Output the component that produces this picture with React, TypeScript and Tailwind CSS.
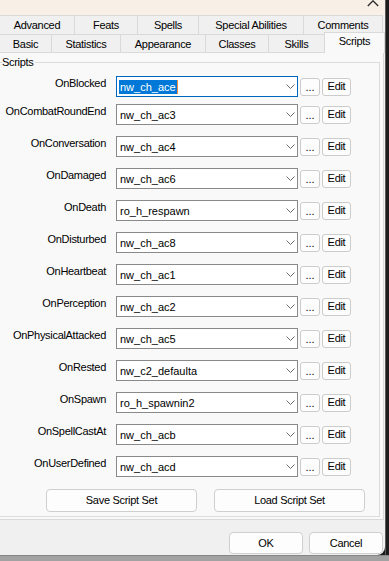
const scripts: [string, string][] = [
  ['OnBlocked', 'nw_ch_ace'],
  ['OnCombatRoundEnd', 'nw_ch_ac3'],
  ['OnConversation', 'nw_ch_ac4'],
  ['OnDamaged', 'nw_ch_ac6'],
  ['OnDeath', 'ro_h_respawn'],
  ['OnDisturbed', 'nw_ch_ac8'],
  ['OnHeartbeat', 'nw_ch_ac1'],
  ['OnPerception', 'nw_ch_ac2'],
  ['OnPhysicalAttacked', 'nw_ch_ac5'],
  ['OnRested', 'nw_c2_defaulta'],
  ['OnSpawn', 'ro_h_spawnin2'],
  ['OnSpellCastAt', 'nw_ch_acb'],
  ['OnUserDefined', 'nw_ch_acd'],
]

const Chevron = () => (
  <svg width="9" height="5" viewBox="0 0 9 5" className="shrink-0">
    <polyline points="0.5,0.5 4.5,4.5 8.5,0.5" fill="none" stroke="#6a6a6a" strokeWidth="1" />
  </svg>
)

const ScriptRow = ({ label, value, focused }: { label: string; value: string; focused?: boolean }) => (
  <div className="flex items-center h-[21px]">
    <div className="w-[106px] text-right pb-[6px] tracking-[-0.3px] whitespace-nowrap">{label}</div>
    <div
      className={
        focused
          ? 'ml-[10px] w-[182px] h-[21px] bg-white border border-[#0067c0] flex items-center pl-[2px] pr-[2px]'
          : 'ml-[10px] w-[182px] h-[21px] bg-white border border-[#8a8a8a] flex items-center pl-[3px] pr-[2px]'
      }
    >
      <div className="flex-1 font-['Liberation_Sans',Arial,sans-serif] text-[11px] leading-[14px]">
        {focused ? (
          <span className="bg-[#0078d7] text-white px-[1px] inline-block h-[14px] border-r border-[#f08a3c]">{value}</span>
        ) : (
          value
        )}
      </div>
      <Chevron />
    </div>
    <button className="ml-[2px] w-[20px] h-[18px] border border-[#cccccc] rounded-[3px] bg-[#fdfdfd] flex items-end justify-center pb-[2px] leading-none">
      ...
    </button>
    <button className="ml-[2px] w-[29px] h-[18px] border border-[#cccccc] rounded-[3px] bg-[#fdfdfd] flex items-center justify-center tracking-[-0.3px]">
      Edit
    </button>
  </div>
)

const Tab = ({ label, w, last }: { label: string; w: string; last?: boolean }) => (
  <div
    className={`${w} h-full border-l border-t border-[#d9d9d9] ${last ? 'border-r' : ''} bg-[#f0f0f0] flex items-center justify-center pt-[1px] tracking-[-0.3px] whitespace-nowrap`}
  >
    {label}
  </div>
)

export default function App() {
  return (
    <div className="w-[389px] h-[561px] overflow-hidden bg-[#1c1c1c] flex flex-col font-['Liberation_Sans',Arial,sans-serif] text-[11px] text-black">
      <div className="flex flex-1 min-h-0">
        <div className="w-[385px] flex flex-col">
          {/* strip above the dialog */}
          <div className="h-[15px] bg-[#f8efe6] flex justify-end items-start pr-[6px]">
            <svg width="12" height="7" viewBox="0 0 12 7">
              <polyline points="0.8,6 6,0.8 11.2,6" fill="none" stroke="#2a2a2a" strokeWidth="1.3" />
            </svg>
          </div>

          <div className="flex-1 bg-[#f0f0f0] rounded-br-[8px] flex flex-col">
            {/* tab row 1 */}
            <div className="flex h-[19px] ml-[-1px]">
              <Tab label="Advanced" w="w-[75px]" />
              <Tab label="Feats" w="w-[63px]" />
              <Tab label="Spells" w="w-[61px]" />
              <Tab label="Special Abilities" w="w-[105px]" />
              <Tab label="Comments" w="w-[80px]" last />
            </div>
            {/* tab row 2 */}
            <div className="flex h-[18px] ml-[-1px] items-start">
              <Tab label="Basic" w="w-[52px]" />
              <Tab label="Statistics" w="w-[69px]" />
              <Tab label="Appearance" w="w-[85px]" />
              <Tab label="Classes" w="w-[63px]" />
              <Tab label="Skills" w="w-[56px]" />
              <div className="relative z-10 -mt-[2px] w-[61px] h-[21px] border-l border-t border-r border-[#d9d9d9] bg-[#f9f9f9] flex items-center justify-center pb-[3px] tracking-[-0.3px]">
                Scripts
              </div>
            </div>

            {/* tab page */}
            <div className="h-[468px] w-[384px] bg-[#f9f9f9] border-t border-b border-r border-[#d9d9d9] flex flex-col">
              <div className="relative mt-[9px] mr-[3px] mb-[2px] flex-1 border-t border-r border-b border-[#dcdcdc] flex flex-col pt-[13px]">
                <div className="absolute left-[2px] top-[-8px] bg-[#f9f9f9] pr-[1px] tracking-[-0.3px] leading-[14px]">Scripts</div>

                <div className="flex flex-col gap-[11px]">
                  {scripts.map(([label, value], i) => (
                    <div key={label} className={i === 0 ? '-mb-[4px]' : ''}>
                      <ScriptRow label={label} value={value} focused={i === 0} />
                    </div>
                  ))}
                </div>

                <div className="flex mt-[12px] pl-[46px] gap-[17px]">
                  <button className="w-[151px] h-[23px] border border-[#cfcfcf] rounded-[4px] bg-[#fdfdfd] tracking-[-0.3px]">
                    Save Script Set
                  </button>
                  <button className="w-[151px] h-[23px] border border-[#cfcfcf] rounded-[4px] bg-[#fdfdfd] tracking-[-0.3px]">
                    Load Script Set
                  </button>
                </div>
              </div>
            </div>

            {/* dialog buttons */}
            <div className="flex justify-end gap-[6px] pt-[12px] pr-[2px]">
              <button className="w-[74px] h-[22px] border border-[#cfcfcf] rounded-[4px] bg-[#fdfdfd] tracking-[-0.3px]">OK</button>
              <button className="w-[74px] h-[22px] border border-[#cfcfcf] rounded-[4px] bg-[#fdfdfd] tracking-[-0.3px]">Cancel</button>
            </div>
          </div>
        </div>
        <div className="flex-1 border-l border-[#5a5a5a]" />
      </div>
      <div className="h-[6px] bg-[#a2a2a2] border-t border-[#868686]" />
    </div>
  )
}
